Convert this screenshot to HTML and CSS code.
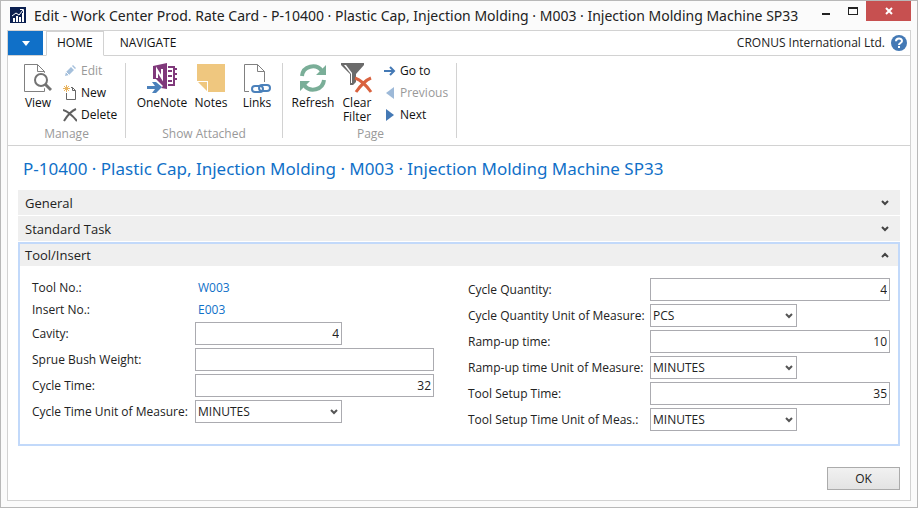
FILE: index.html
```html
<!DOCTYPE html>
<html lang="en">
<head>
<meta charset="utf-8">
<title>Edit - Work Center Prod. Rate Card</title>
<meta name="viewport" content="width=device-width, initial-scale=1">
<link rel="stylesheet" href="styles.css">
</head>
<body>
<div class="window">
  <header class="titlebar">
    <svg class="app-icon" width="16" height="16" viewBox="0 0 16 16"><path fill="#0b2050" d="M0 0h16v16H0z"/><path fill="#fff" d="M3 11h2v4H3zM6 9h2v6H6zM9 10h2v5H9zM12 6h2v9h-2z"/><path fill="none" stroke="#fff" d="M2 9l4-3 3 2 4-5M10 2.500h3.500V6"/></svg>
    <span class="window-title">Edit - Work Center Prod. Rate Card - P-10400 · Plastic Cap, Injection Molding · M003 · Injection Molding Machine SP33</span>
    <div class="window-buttons">
      <button class="win-btn" aria-label="Minimize"><svg width="10" height="10" viewBox="0 0 10 10"><path fill="#222" d="M1 7h8v2H1z"/></svg></button>
      <button class="win-btn" aria-label="Maximize"><svg width="10" height="8" viewBox="0 0 10 8"><path fill="#222" fill-rule="evenodd" d="M0 0h10v8H0zM1 2v5h8V2z"/></svg></button>
      <button class="win-btn close" aria-label="Close"><svg width="8" height="8" viewBox="0 0 8 8"><path stroke="#fff" stroke-width="2" d="M1 1l6 6M7 1L1 7"/></svg></button>
    </div>
  </header>

  <div class="client">
    <nav class="tabs">
      <button class="file-menu" aria-label="Application menu"><svg width="8" height="5" viewBox="0 0 8 5"><path fill="#fff" d="M0 0h8L4 5z"/></svg></button>
      <button class="tab active">HOME</button>
      <button class="tab">NAVIGATE</button>
      <span class="company">CRONUS International Ltd.</span>
      <button class="help" aria-label="Help"><svg width="16" height="16" viewBox="0 0 16 16"><circle cx="8" cy="8" r="8" fill="#4479b5"/><path fill="none" stroke="#fff" stroke-width="2" d="M5 6.200C5 2.600 11 2.600 11 6c0 2-3 2-3 4"/><path fill="#fff" d="M7 11h2v2H7z"/></svg></button>
    </nav>

    <div class="ribbon">
      <section class="group manage">
        <div class="actions">
          <button class="big"><svg width="28" height="30" viewBox="0 0 28 30"><path fill="#fff" stroke="#808080" d="M.5 1.500h13l7 7v20H.5zM13.500 1.500v7h7"/><path stroke="#fff" stroke-width="6" d="M20 20l7 8"/><circle cx="17" cy="17" r="8" fill="#fff"/><circle cx="17" cy="17" r="6" fill="#fff" stroke="#737373" stroke-width="2"/><path stroke="#737373" stroke-width="3" d="M21 21l6 6"/></svg><span>View</span></button>
          <div class="stack">
            <button class="small" disabled><svg width="14" height="14" viewBox="0 0 14 14"><path fill="#a5c0dc" d="M2 12l1-4 5-5 3 3-5 5zM9 2l1-1 3 3-1 1z"/><path stroke="#fff" d="M3 8l3 3"/></svg>Edit</button>
            <button class="small"><svg width="14" height="16" viewBox="0 0 14 16"><path fill="none" stroke="#666" d="M3.500 8v6.500h9v-9l-3-3H8M9.500 2.500v3h3"/><path stroke="#e9b45f" d="M3.500 0v7M0 3.500h7M1 1l5 5M6 1L1 6"/></svg>New</button>
            <button class="small"><svg width="14" height="14" viewBox="0 0 14 14"><path fill="none" stroke="#606060" stroke-width="2" d="M0 2c4 1 9 5 14 11M13 1C8 3 4 8 1 13"/></svg>Delete</button>
          </div>
        </div>
        <h2>Manage</h2>
      </section>
      <section class="group attached">
        <div class="actions">
          <button class="big"><svg width="32" height="30" viewBox="0 0 32 30"><path fill="#80397b" d="M7 3l14-3v26l-6-1 2-2-7-7H7z"/><path fill="none" stroke="#80397b" stroke-width="2" d="M22 4h6v18h-6M22 8h4M22 13h4M22 18h4M28 6h3M28 11h3M28 16h3"/><path fill="none" stroke="#fff" stroke-width="2" d="M11 15V7l5 8V6"/><path fill="#4b81bb" d="M1 23h8l-3-4h4l6 5-6 6H6l3-4H1z"/></svg><span>OneNote</span></button>
          <button class="big"><svg width="28" height="30" viewBox="0 0 28 30"><path fill="#efc77f" d="M0 1h28v28H11V18H0zM1 19h9v9z"/></svg><span>Notes</span></button>
          <button class="big"><svg width="28" height="30" viewBox="0 0 28 30"><path fill="none" stroke="#808080" d="M6 28.500H1.500V1.500h13l7 7V19M14.500 1.500v7h7"/><g fill="none" stroke="#4b81bb" stroke-width="2"><rect x="9" y="23" width="11" height="6" rx="3"/><rect x="16" y="22" width="11" height="6" rx="3"/></g></svg><span>Links</span></button>
        </div>
        <h2>Show Attached</h2>
      </section>
      <section class="group page">
        <div class="actions">
          <button class="big"><svg width="28" height="30" viewBox="0 0 28 30"><g fill="none" stroke="#7aae98" stroke-width="4"><path d="M3 13C4 3 17 0 23 8"/><path d="M25 17C24 27 11 30 5 22"/></g><path fill="#7aae98" d="M27 2v10H17zM1 28V18h10z"/></svg><span>Refresh</span></button>
          <button class="big"><svg width="32" height="30" viewBox="0 0 32 30"><path fill="#6b6b6b" d="M0 0h23v2l-8 9v8l-3 3H9V11L0 2z"/><path fill="#fff" d="M3 2h2l6 8v10h-1V11z"/><path fill="none" stroke="#d9623f" stroke-width="3" d="M14 15c6 2 11 7 16 14M30 15c-5 2-10 7-15 14"/></svg><span>Clear<br>Filter</span></button>
          <div class="stack">
            <button class="small"><svg width="12" height="12" viewBox="0 0 12 12"><path fill="none" stroke="#4479b5" stroke-width="2" d="M0 6h10M6 2l4 4-4 4"/></svg>Go to</button>
            <button class="small" disabled><svg width="12" height="12" viewBox="0 0 12 12"><path fill="#9db9d8" d="M10 0v12L2 6z"/></svg>Previous</button>
            <button class="small"><svg width="12" height="12" viewBox="0 0 12 12"><path fill="#4479b5" d="M2 0v12l8-6z"/></svg>Next</button>
          </div>
        </div>
        <h2>Page</h2>
      </section>
    </div>

    <main class="content">
      <h1>P-10400 · Plastic Cap, Injection Molding · M003 · Injection Molding Machine SP33</h1>
      <div class="fasttabs">
        <button class="fasttab">General<svg width="8" height="6" viewBox="0 0 8 6"><path fill="none" stroke="#444" stroke-width="2" d="M1 1l3 3 3-3"/></svg></button>
        <button class="fasttab">Standard Task<svg width="8" height="6" viewBox="0 0 8 6"><path fill="none" stroke="#444" stroke-width="2" d="M1 1l3 3 3-3"/></svg></button>
        <section class="open-tab">
          <button class="fasttab" aria-expanded="true">Tool/Insert<svg width="8" height="6" viewBox="0 0 8 6"><path fill="none" stroke="#444" stroke-width="2" d="M1 5l3-3 3 3"/></svg></button>
          <form class="fields" id="card">
            <div class="column left">
              <div class="field link"><span>Tool No.:</span><a href="#tool">W003</a></div>
              <div class="field link"><span>Insert No.:</span><a href="#insert">E003</a></div>
              <div class="field"><label for="cavity">Cavity:</label><input class="short" id="cavity" value="4"></div>
              <div class="field"><label for="weight">Sprue Bush Weight:</label><input id="weight"></div>
              <div class="field"><label for="cycle">Cycle Time:</label><input id="cycle" value="32"></div>
              <div class="field"><label for="cycle-unit">Cycle Time Unit of Measure:</label><div class="select short"><select id="cycle-unit"><option>MINUTES</option></select><svg width="8" height="6" viewBox="0 0 8 6"><path fill="none" stroke="#555" stroke-width="2" d="M1 1l3 3 3-3"/></svg></div></div>
            </div>
            <div class="column right">
              <div class="field"><label for="qty">Cycle Quantity:</label><input id="qty" value="4"></div>
              <div class="field"><label for="qty-unit">Cycle Quantity Unit of Measure:</label><div class="select short"><select id="qty-unit"><option>PCS</option></select><svg width="8" height="6" viewBox="0 0 8 6"><path fill="none" stroke="#555" stroke-width="2" d="M1 1l3 3 3-3"/></svg></div></div>
              <div class="field"><label for="ramp">Ramp-up time:</label><input id="ramp" value="10"></div>
              <div class="field"><label for="ramp-unit">Ramp-up time Unit of Measure:</label><div class="select short"><select id="ramp-unit"><option>MINUTES</option></select><svg width="8" height="6" viewBox="0 0 8 6"><path fill="none" stroke="#555" stroke-width="2" d="M1 1l3 3 3-3"/></svg></div></div>
              <div class="field"><label for="setup">Tool Setup Time:</label><input id="setup" value="35"></div>
              <div class="field"><label for="setup-unit">Tool Setup Time Unit of Meas.:</label><div class="select short"><select id="setup-unit"><option>MINUTES</option></select><svg width="8" height="6" viewBox="0 0 8 6"><path fill="none" stroke="#555" stroke-width="2" d="M1 1l3 3 3-3"/></svg></div></div>
            </div>
          </form>
        </section>
      </div>
      <footer><button class="ok" form="card">OK</button></footer>
    </main>
  </div>
</div>
</body>
</html>
```
FILE: styles.css
```css
* { box-sizing: border-box; }
body {
  margin: 0;
  color: #222;
  font: 12px/16px "Open Sans", "Noto Sans", sans-serif;
}
button, input, select { font: inherit; color: inherit; }
button { margin: 0; padding: 0; border: 0; background: none; }
svg { display: block; flex: none; }
h1, h2 { margin: 0; font-weight: 400; }

.window {
  display: flex;
  flex-direction: column;
  min-height: 100vh;
  padding: 0 6px 6px;
  border: 1px solid #b8b8b8;
  background: #fbfbfb;
}
.titlebar { display: flex; height: 29px; }
.app-icon { margin: 6px 8px 0 3px; }
.window-title {
  flex: 1;
  min-width: 0;
  overflow: hidden;
  font-family: "Noto Sans", "Open Sans", sans-serif;
  font-size: 14px;
  line-height: 29px;
  white-space: nowrap;
}
.window-buttons { display: flex; height: 20px; }
.win-btn { display: grid; place-items: center; width: 27px; }
.win-btn.close { width: 45px; background: #c75050; }

.client {
  flex: 1;
  display: flex;
  flex-direction: column;
  border: 1px solid #d2d2d2;
  background: #fff;
}
.tabs {
  display: flex;
  align-items: center;
  height: 25px;
  padding-right: 3px;
  border-bottom: 1px solid #d2d2d2;
}
.file-menu {
  display: grid;
  place-items: center;
  align-self: flex-start;
  width: 35px;
  height: 24px;
  margin-right: 3px;
  background: #1070c8;
}
.tab { height: 25px; padding: 0 16px; color: #111; }
.tab.active {
  padding: 0 10px;
  border: 1px solid #d2d2d2;
  border-bottom-color: #fff;
  background: #fff;
}
.company { margin-left: auto; }
.help { margin-left: 6px; }

.ribbon {
  display: flex;
  padding: 7px 0;
  border-bottom: 1px solid #d2d2d2;
}
.group {
  display: flex;
  flex-direction: column;
  justify-content: space-between;
  height: 75px;
  border-right: 1px solid #d2d2d2;
}
.manage { width: 118px; padding-left: 10px; }
.attached { width: 157px; padding-left: 10px; }
.page { width: 174px; padding-left: 8px; }
.actions { display: flex; height: 60px; }
.group h2 { color: #999; font-size: 12px; line-height: 8px; text-align: center; }
.manage h2, .attached h2 { padding-right: 10px; }
.page h2 { padding-right: 6px; }
.big {
  display: flex;
  flex-direction: column;
  align-items: center;
  color: #111;
  line-height: 14px;
}
.big span { margin-top: 3px; }
.manage .big { width: 40px; }
.attached .big { width: 52px; }
.attached .big + .big { width: 46px; }
.page .big { width: 44px; }
.stack { display: flex; flex-direction: column; margin-left: 5px; }
.small {
  display: flex;
  align-items: center;
  gap: 4px;
  height: 22px;
  padding-bottom: 6px;
  color: #111;
}
.small:disabled { color: #999; }

.content { padding: 11px 10px 8px; }
.content h1 {
  padding-left: 5px;
  color: #1070c8;
  font-family: "Noto Sans", "Open Sans", sans-serif;
  font-size: 17px;
  line-height: 24px;
}
.fasttabs {
  display: flex;
  flex-direction: column;
  gap: 1px;
  margin-top: 9px;
}
.fasttab {
  display: flex;
  align-items: center;
  justify-content: space-between;
  width: 100%;
  height: 25px;
  padding: 0 11px 0 7px;
  background: #efefef;
  font-size: 13px;
}
.open-tab { border: 2px solid #c2d9fa; }
.open-tab .fasttab { height: 22px; padding: 0 9px 0 5px; }
.fields {
  display: grid;
  grid-template-columns: 402fr 422fr;
  gap: 34px;
  padding: 12px 8px 13px 12px;
}
.column { display: flex; flex-direction: column; gap: 3px; }
.field {
  display: grid;
  grid-template-columns: 163px 1fr;
  align-items: center;
  height: 23px;
}
.right .field { grid-template-columns: 182px 1fr; }
.field.link { height: 19px; }
.field a { padding-left: 3px; color: #1070c8; text-decoration: none; }
.field input, .field select {
  width: 100%;
  height: 23px;
  padding: 0 2px;
  border: 1px solid #ababb0;
  border-radius: 0;
  background: #fff;
}
.field input { text-align: right; }
.field .short { width: 147px; }
.select { position: relative; }
.select select { appearance: none; }
.select svg { position: absolute; top: 9px; right: 4px; pointer-events: none; }

footer { display: flex; justify-content: flex-end; margin-top: 21px; }
.ok {
  width: 73px;
  height: 23px;
  border: 1px solid #ababab;
  background: linear-gradient(#f1f1f1, #e3e3e3);
}
```
